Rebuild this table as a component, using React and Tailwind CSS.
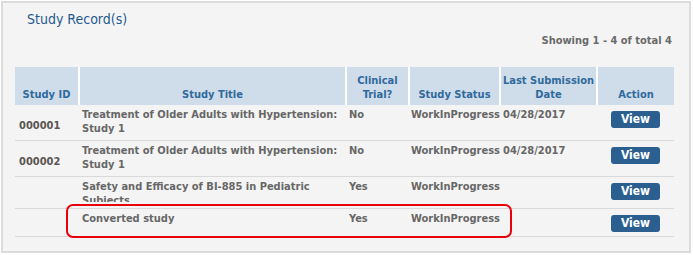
import React from 'react';

const rows = [
  { id: '000001', title: 'Treatment of Older Adults with Hypertension: Study 1', trial: 'No', status: 'WorkInProgress', date: '04/28/2017', h: 'h-[35px]' },
  { id: '000002', title: 'Treatment of Older Adults with Hypertension: Study 1', trial: 'No', status: 'WorkInProgress', date: '04/28/2017', h: 'h-[36px]' },
  { id: '', title: 'Safety and Efficacy of BI-885 in Pediatric Subjects', trial: 'Yes', status: 'WorkInProgress', date: '', h: 'h-[32px]', clip: true },
  { id: '', title: 'Converted study', trial: 'Yes', status: 'WorkInProgress', date: '', h: 'h-[28px]' },
];

function App() {
  return (
    <div
      className="w-[693px] h-[255px] bg-white pl-[1px] pt-[1px]"
      style={{ fontFamily: '"DejaVu Sans Condensed", "DejaVu Sans", sans-serif' }}
    >
      {/* Panel */}
      <div className="w-[690px] h-[252px] border-2 border-[#dcdcdc] bg-[#f4f4f4]">
        <div className="pl-[24px] pt-[7px] text-[14px] leading-[18px] text-[#1f5a8e]">Study Record(s)</div>
        <div className="pr-[17px] pt-[6px] text-right text-[11px] leading-[14px] font-bold text-[#6a6a6a]">
          Showing 1 - 4 of total 4
        </div>

        {/* Table */}
        <div className="relative ml-[12px] mt-[19px] w-[659px]">
          <table className="w-[659px] table-fixed border-collapse text-[11px] leading-[14px] font-bold">
            <colgroup>
              <col className="w-[64px]" />
              <col className="w-[267px]" />
              <col className="w-[63px]" />
              <col className="w-[91px]" />
              <col className="w-[97px]" />
              <col className="w-[77px]" />
            </colgroup>
            <thead>
              <tr className="h-[38px] bg-[#cfdcea] text-[#2f6a9c]">
                <th className="border-r-2 border-white align-bottom pb-[3px] text-center font-bold">Study ID</th>
                <th className="border-x-2 border-white align-bottom pb-[3px] text-center font-bold">Study Title</th>
                <th className="border-x-2 border-white align-bottom pb-[3px] text-center font-bold">Clinical<br />Trial?</th>
                <th className="border-x-2 border-white align-bottom pb-[3px] text-center font-bold">Study Status</th>
                <th className="border-x-2 border-white align-bottom pb-[3px] text-center font-bold">Last Submission<br />Date</th>
                <th className="border-l-2 border-white align-bottom pb-[3px] text-center font-bold">Action</th>
              </tr>
            </thead>
            <tbody className="text-[#676767]">
              {rows.map((r, i) => (
                <tr key={i} className={`${r.h} border-b border-[#d9d9d9]`}>
                  <td className="align-middle pl-[4px] pt-[8px] text-[#5a5550]">{r.id}</td>
                  <td className="align-top pl-[3px] pt-[3px]">
                    {r.clip ? <div className="h-[22px] overflow-hidden">{r.title}</div> : r.title}
                  </td>
                  <td className="align-top pl-[3px] pt-[3px]">{r.trial}</td>
                  <td className="align-top pl-[2px] pt-[3px] whitespace-nowrap">{r.status}</td>
                  <td className="align-top pl-[3px] pt-[3px]">{r.date}</td>
                  <td className="align-top pt-[6px] text-center">
                    <button className="w-[49px] h-[17px] rounded-[3px] bg-[#2a5f8f] text-white text-[12px] leading-[17px] font-bold">
                      View
                    </button>
                  </td>
                </tr>
              ))}
            </tbody>
          </table>

          {/* Highlight annotation */}
          <div className="absolute left-[51px] top-[137px] w-[446px] h-[34px] rounded-[7px] border-[2.5px] border-[#e8000b] pointer-events-none" />
        </div>
      </div>
    </div>
  );
}

export default App;
